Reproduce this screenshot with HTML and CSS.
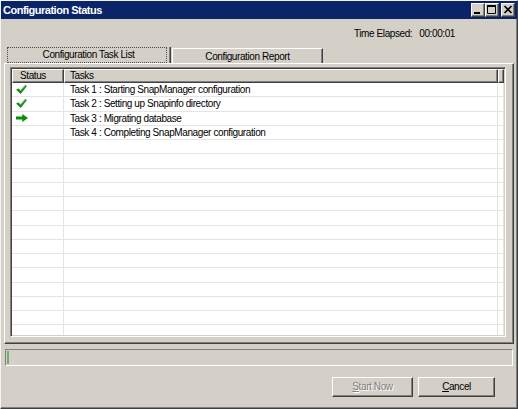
FILE: index.html
```html
<!DOCTYPE html>
<html>
<head>
<meta charset="utf-8">
<link rel="stylesheet" href="styles.css">
</head>
<body>
<div class="window">
  <div class="titlebar">
    <span class="title">Configuration Status</span>
    <div class="ctrls">
      <span class="cbtn"><svg width="12" height="12" viewBox="0 0 12 12"><rect x="2" y="8" width="6" height="2" fill="#000"/></svg></span>
      <span class="cbtn"><svg width="12" height="12" viewBox="0 0 12 12"><path d="M1.5 1.5h8v8h-8z" fill="none" stroke="#000"/><rect x="1" y="1" width="9" height="2" fill="#000"/></svg></span>
      <span class="cbtn close"><svg width="12" height="12" viewBox="0 0 12 12"><path d="M2.5 2l7 7M9.5 2l-7 7" stroke="#000" stroke-width="1.6"/></svg></span>
    </div>
  </div>
  <div class="elapsed"><span>Time Elapsed:</span><span>00:00:01</span></div>
  <div class="tabs">
    <div class="tab active">Configuration Task List</div>
    <div class="tab">Configuration Report</div>
  </div>
  <div class="panel">
    <div class="listview">
      <div class="lv-head">
        <div class="hcell c1">Status</div>
        <div class="hcell c2">Tasks</div>
        <div class="hcell c3"></div>
      </div>
      <div class="lv-body">
        <div class="row"><div class="cell c1"><svg class="ico" width="11" height="9" viewBox="0 0 11 9"><path d="M0 4.6 L2.9 3.5 L4.3 5.6 L9.2 0 L11 0.9 L4.7 9 Z" fill="#168a16"/><path d="M4.3 5.6 L9.2 0 L10 0.4 L4.5 6.6 Z" fill="#62c862"/></svg></div><div class="cell c2">Task 1 : Starting SnapManager configuration</div><div class="cell c3"></div></div>
        <div class="row"><div class="cell c1"><svg class="ico" width="11" height="9" viewBox="0 0 11 9"><path d="M0 4.6 L2.9 3.5 L4.3 5.6 L9.2 0 L11 0.9 L4.7 9 Z" fill="#168a16"/><path d="M4.3 5.6 L9.2 0 L10 0.4 L4.5 6.6 Z" fill="#62c862"/></svg></div><div class="cell c2">Task 2 : Setting up Snapinfo directory</div><div class="cell c3"></div></div>
        <div class="row"><div class="cell c1"><svg class="ico" width="12" height="8" viewBox="0 0 12 8"><path d="M0 2.5 H6.3 V0 L12 4 L6.3 8 V5.5 H0 Z" fill="#0c8a0c"/></svg></div><div class="cell c2">Task 3 : Migrating database</div><div class="cell c3"></div></div>
        <div class="row"><div class="cell c1"></div><div class="cell c2">Task 4 : Completing SnapManager configuration</div><div class="cell c3"></div></div>
        <div class="row"><div class="cell c1"></div><div class="cell c2"></div><div class="cell c3"></div></div>
        <div class="row"><div class="cell c1"></div><div class="cell c2"></div><div class="cell c3"></div></div>
        <div class="row"><div class="cell c1"></div><div class="cell c2"></div><div class="cell c3"></div></div>
        <div class="row"><div class="cell c1"></div><div class="cell c2"></div><div class="cell c3"></div></div>
        <div class="row"><div class="cell c1"></div><div class="cell c2"></div><div class="cell c3"></div></div>
        <div class="row"><div class="cell c1"></div><div class="cell c2"></div><div class="cell c3"></div></div>
        <div class="row"><div class="cell c1"></div><div class="cell c2"></div><div class="cell c3"></div></div>
        <div class="row"><div class="cell c1"></div><div class="cell c2"></div><div class="cell c3"></div></div>
        <div class="row"><div class="cell c1"></div><div class="cell c2"></div><div class="cell c3"></div></div>
        <div class="row"><div class="cell c1"></div><div class="cell c2"></div><div class="cell c3"></div></div>
        <div class="row"><div class="cell c1"></div><div class="cell c2"></div><div class="cell c3"></div></div>
        <div class="row"><div class="cell c1"></div><div class="cell c2"></div><div class="cell c3"></div></div>
        <div class="row"><div class="cell c1"></div><div class="cell c2"></div><div class="cell c3"></div></div>
        <div class="row"><div class="cell c1"></div><div class="cell c2"></div><div class="cell c3"></div></div>
      </div>
    </div>
  </div>
  <div class="progress"><div class="fill"></div></div>
  <div class="buttons">
    <button class="btn start" disabled><u>S</u>tart Now</button>
    <button class="btn cancel"><u>C</u>ancel</button>
  </div>
</div>
</body>
</html>
```

FILE: styles.css
```css
body {
  margin: 0;
  font-family: "Liberation Sans", Arial, sans-serif;
  font-size: 10px;
  letter-spacing: -0.4px;
  color: #000;
}
.window {
  width: 518px;
  height: 409px;
  box-sizing: border-box;
  background: #d4d0c8;
  border-top: 1px solid #f4f4f4;
  border-left: 1px solid #f4f4f4;
  border-right: 1px solid #404040;
  border-bottom: 1px solid #404040;
  box-shadow: inset 0 -1px #808080, inset -1px 0 #808080;
  display: flex;
  flex-direction: column;
}
.titlebar {
  height: 18px;
  background: #0a246a;
  display: flex;
  align-items: center;
  justify-content: space-between;
  padding: 0 2px;
}
.title {
  color: #fff;
  font-weight: bold;
  font-size: 11px;
  letter-spacing: -0.5px;
  line-height: 18px;
}
.ctrls {
  display: flex;
  align-items: center;
}
.cbtn {
  width: 14px;
  height: 14px;
  box-sizing: border-box;
  background: #d4d0c8;
  border-top: 1px solid #fff;
  border-left: 1px solid #fff;
  border-right: 1px solid #404040;
  border-bottom: 1px solid #404040;
  box-shadow: inset -1px -1px #808080;
  display: flex;
}
.cbtn.close { margin-left: 2px; }
.elapsed {
  margin-top: 8px;
  height: 13px;
  line-height: 13px;
  display: flex;
  justify-content: flex-end;
  gap: 7px;
  padding-right: 62px;
}
.tabs {
  margin-top: 7px;
  height: 16px;
  display: flex;
  align-items: flex-end;
  padding-left: 6px;
}
.tab {
  box-sizing: border-box;
  text-align: center;
}
.tab.active {
  position: relative;
  width: 164px;
  height: 16px;
  line-height: 16px;
  border-right: 1px solid #404040;
  box-shadow: inset -1px 0 #808080;
}
.tab.active::after {
  content: "";
  position: absolute;
  left: 0;
  top: 0;
  width: 158px;
  bottom: 0;
  border: 1px dotted #4a4a4a;
}
.tab:not(.active) {
  margin-left: 1px;
  width: 151px;
  height: 15px;
  line-height: 15px;
  border-top: 1px solid #fff;
  border-left: 1px solid #fff;
  border-right: 1px solid #404040;
  box-shadow: inset -1px 0 #808080;
}
.panel {
  margin-left: 3px;
  width: 510px;
  height: 281px;
  box-sizing: border-box;
  border-top: 1px solid #fff;
  border-left: 1px solid #fff;
  border-right: 1px solid #404040;
  border-bottom: 1px solid #404040;
  box-shadow: inset -1px -1px #808080;
  padding: 3px 0 0 5px;
}
.listview {
  width: 496px;
  height: 270px;
  box-sizing: border-box;
  background: #fff;
  border-style: solid;
  border-width: 1px;
  border-color: #808080 #fff #fff #808080;
  box-shadow: inset 1px 1px #404040, inset -1px -1px #d4d0c8;
  padding: 1px;
  display: flex;
  flex-direction: column;
}
.lv-head {
  display: flex;
  height: 14px;
  flex: none;
}
.hcell {
  box-sizing: border-box;
  height: 14px;
  background: #d4d0c8;
  border-top: 1px solid #fff;
  border-left: 1px solid #fff;
  border-right: 1px solid #404040;
  border-bottom: 1px solid #404040;
  box-shadow: inset -1px -1px #808080;
  line-height: 12px;
  white-space: nowrap;
}
.c1 { width: 52px; flex: none; }
.c2 { width: 434px; flex: none; }
.c3 { width: 6px; flex: none; }
.hcell.c1 { padding-left: 7px; }
.hcell.c2 { padding-left: 5px; }
.lv-body {
  flex: 1;
  overflow: hidden;
  background: #fff;
}
.row {
  display: flex;
  height: 14.25px;
  box-sizing: border-box;
  border-bottom: 1px solid #e4e4e4;
}
.cell {
  box-sizing: border-box;
  border-right: 1px solid #e4e4e4;
  line-height: 13px;
  white-space: nowrap;
}
.cell.c2 { padding-left: 6px; }
.cell.c1 {
  display: flex;
  align-items: center;
  padding-left: 4px;
}
.progress {
  margin: 5px 0 0 4px;
  width: 508px;
  height: 17px;
  box-sizing: border-box;
  border-top: 1px solid #808080;
  border-left: 1px solid #808080;
  border-right: 1px solid #fff;
  border-bottom: 1px solid #fff;
  padding: 1px;
  display: flex;
}
.fill {
  width: 2px;
  background: #6cb06c;
}
.buttons {
  margin-top: 11px;
  display: flex;
  justify-content: flex-end;
  gap: 5px;
  padding-right: 22px;
}
.btn {
  height: 20px;
  box-sizing: border-box;
  background: #d4d0c8;
  border-style: solid;
  border-width: 1px;
  border-color: #fff #404040 #404040 #fff;
  box-shadow: inset -1px -1px #808080;
  font-family: "Liberation Sans", Arial, sans-serif;
  font-size: 10px;
  letter-spacing: -0.4px;
  line-height: 18px;
  padding: 0;
  color: #000;
}
.btn.start {
  width: 81px;
  color: #808080;
  text-shadow: 1px 1px 0 #fff;
}
.btn.cancel { width: 77px; }
```
